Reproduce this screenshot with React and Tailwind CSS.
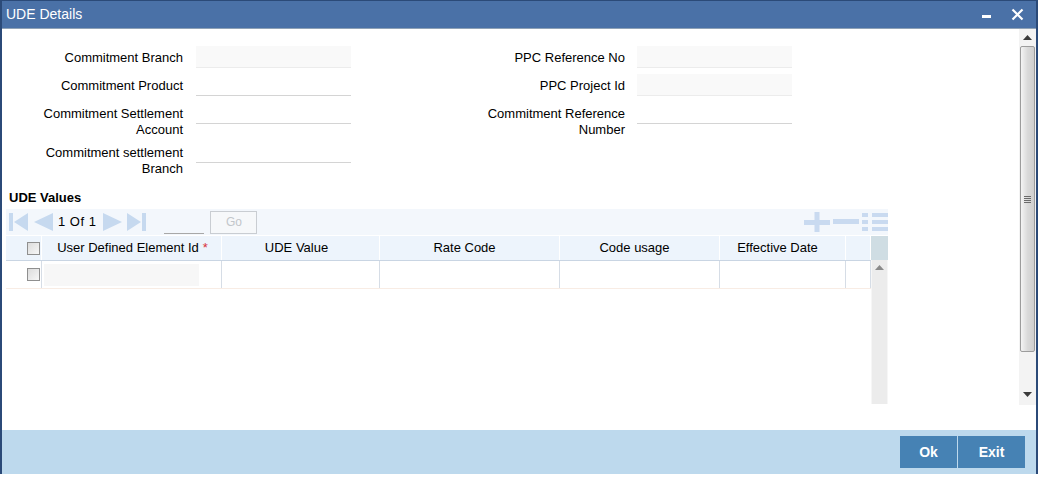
import React from "react";

const Field = ({ gray }) => (
  <div className={`h-[22px] w-[155px] border-b border-[#d4d4d4] ${gray ? "bg-[#f9f9f9] border-[#ececec]" : "bg-white"}`} />
);

const Label = ({ children, w }) => (
  <div className={`pt-[4px] text-right text-[13px] leading-[16px] text-black ${w}`}>{children}</div>
);

const Checkbox = () => (
  <span className="inline-block h-[13px] w-[13px] border border-[#8f8f8f] bg-gradient-to-br from-[#dcdcdc] to-[#f7f7f7]" />
);

const NavIcon = ({ kind }) => (
  <svg width="22" height="22" viewBox="0 0 22 22" className="shrink-0">
    {kind === "first" && (
      <>
        <rect x="1" y="2" width="4" height="18" fill="#c6d9ef" />
        <polygon points="20,2 20,20 6,11" fill="#c6d9ef" />
      </>
    )}
    {kind === "prev" && <polygon points="21,2 21,20 2,11" fill="#c6d9ef" />}
    {kind === "next" && <polygon points="1,2 1,20 20,11" fill="#c6d9ef" />}
    {kind === "last" && (
      <>
        <polygon points="1,2 1,20 15,11" fill="#c6d9ef" />
        <rect x="16" y="2" width="4" height="18" fill="#c6d9ef" />
      </>
    )}
  </svg>
);

const cols = [
  { w: "w-[180px]", t: "User Defined Element Id", req: true, p: "pl-[2px]" },
  { w: "w-[158px]", t: "UDE Value", p: "pr-[8px]" },
  { w: "w-[180px]", t: "Rate Code", p: "pr-[10px]" },
  { w: "w-[160px]", t: "Code usage", p: "pr-[10px]" },
  { w: "w-[126px]", t: "Effective Date", p: "pr-[10px]" },
  { w: "w-[25px]", t: "", p: "" },
];

export default function App() {
  return (
    <div className="h-[483px] w-[1038px] bg-white font-['Liberation_Sans',Arial,sans-serif]">
      <div className="flex h-[474px] flex-col border-x-2 border-t border-[#2b4a78]">
        {/* Title bar */}
        <div className="flex h-[28px] shrink-0 items-center justify-between border-b border-[#8ea1b6] bg-[#4a71a7] pl-[4px] pr-[12px]">
          <span className="text-[14px] text-white">UDE Details</span>
          <div className="flex items-center gap-[20px]">
            <span className="mt-[3px] block h-[3px] w-[9px] bg-white" />
            <svg width="13" height="13" viewBox="0 0 13 13">
              <path d="M1.5 1.5 L11.5 11.5 M11.5 1.5 L1.5 11.5" stroke="white" strokeWidth="2.2" />
            </svg>
          </div>
        </div>

        {/* Body */}
        <div className="flex h-[376px] shrink-0">
          <div className="flex-1">
            <div className="flex pt-[17px]">
              {/* left column */}
              <div className="flex flex-col">
                <div className="flex h-[22px] items-start gap-[13px]">
                  <Label w="w-[181px]">Commitment Branch</Label>
                  <Field gray />
                </div>
                <div className="mt-[6px] flex h-[22px] items-start gap-[13px]">
                  <Label w="w-[181px]">Commitment Product</Label>
                  <Field />
                </div>
                <div className="mt-[6px] flex items-start gap-[13px]">
                  <Label w="w-[181px]">Commitment Settlement<br />Account</Label>
                  <Field />
                </div>
                <div className="mt-[3px] flex items-start gap-[13px]">
                  <Label w="w-[181px]">Commitment settlement<br />Branch</Label>
                  <Field />
                </div>
              </div>
              {/* right column */}
              <div className="flex flex-col">
                <div className="flex h-[22px] items-start gap-[12px]">
                  <Label w="w-[274px]">PPC Reference No</Label>
                  <Field gray />
                </div>
                <div className="mt-[6px] flex h-[22px] items-start gap-[12px]">
                  <Label w="w-[274px]">PPC Project Id</Label>
                  <Field gray />
                </div>
                <div className="mt-[6px] flex items-start gap-[12px]">
                  <Label w="w-[274px]">Commitment Reference<br />Number</Label>
                  <Field />
                </div>
              </div>
            </div>

            <div className="mt-[13px] pl-[7px] text-[13px] font-bold leading-[16px] text-black">UDE Values</div>

            {/* Grid */}
            <div className="ml-[4px] mt-[3px] w-[882px]">
              <div className="flex h-[26px] items-center bg-[#f3f7fc] pl-[2px]">
                <NavIcon kind="first" />
                <span className="w-[2px]" />
                <NavIcon kind="prev" />
                <span className="ml-[4px] text-[13px] tracking-[0.5px] text-black">1&nbsp;Of&nbsp;1</span>
                <span className="ml-[6px]" />
                <NavIcon kind="next" />
                <span className="w-[2px]" />
                <NavIcon kind="last" />
                <div className="ml-[16px] mt-[22px] h-px w-[40px] bg-[#a8a8a8]" />
                <div className="ml-[6px] flex h-[23px] w-[47px] items-center justify-center border border-[#c9cdd2] bg-[#f6f8fa] text-[12px] text-[#c2c6ca]">
                  Go
                </div>
                <div className="ml-auto flex items-center gap-[3px]">
                  <svg width="26" height="20" viewBox="0 0 26 20">
                    <rect x="0" y="8" width="26" height="5" fill="#c9daf0" />
                    <rect x="10.5" y="0" width="5" height="20" fill="#c9daf0" />
                  </svg>
                  <svg width="26" height="20" viewBox="0 0 26 20">
                    <rect x="0" y="7" width="26" height="5" fill="#c9daf0" />
                  </svg>
                  <svg width="26" height="20" viewBox="0 0 26 20">
                    <rect x="0" y="1" width="6" height="4" fill="#c9daf0" />
                    <rect x="10" y="1" width="16" height="4" fill="#c9daf0" />
                    <rect x="0" y="8" width="6" height="4" fill="#c9daf0" />
                    <rect x="10" y="8" width="16" height="4" fill="#c9daf0" />
                    <rect x="0" y="15" width="6" height="4" fill="#c9daf0" />
                    <rect x="10" y="15" width="16" height="4" fill="#c9daf0" />
                  </svg>
                </div>
              </div>

              <div className="mt-px flex h-[168px]">
                <div className="w-[865px]">
                  {/* header */}
                  <div className="flex h-[25px] border-b border-[#c9d5e3] bg-[#edf4fc]">
                    <div className="flex w-[36px] items-center justify-end border-r border-white pr-[1px]">
                      <Checkbox />
                    </div>
                    {cols.map((c, i) => (
                      <div
                        key={i}
                        className={`flex items-center justify-center border-r border-white text-[13px] text-black ${c.w} ${c.p}`}
                      >
                        {c.t}
                        {c.req && <span className="ml-[4px] text-[#d9303a]">*</span>}
                      </div>
                    ))}
                  </div>
                  {/* row */}
                  <div className="flex h-[28px] border-b border-[#f8ece4]">
                    <div className="flex w-[36px] items-center justify-end border-r border-[#d6dde6] pr-[1px]">
                      <Checkbox />
                    </div>
                    <div className="flex w-[180px] items-center border-r border-[#d6dde6] pl-[2px]">
                      <div className="h-[22px] w-[155px] bg-[#f7f7f7]" />
                    </div>
                    {cols.slice(1).map((c, i) => (
                      <div key={i} className={`border-r border-[#d6dde6] ${c.w}`} />
                    ))}
                  </div>
                </div>
                <div className="flex w-[17px] flex-col">
                  <div className="h-[24px] bg-[#cfdde3]" />
                  <div className="flex flex-1 justify-center border-x border-[#f6f6f6] bg-[#ececec] pt-[5px]">
                    <svg width="9" height="5" viewBox="0 0 9 5">
                      <polygon points="0,5 9,5 4.5,0" fill="#8a8a8a" />
                    </svg>
                  </div>
                </div>
              </div>
            </div>
          </div>

          {/* page scrollbar */}
          <div className="flex w-[17px] flex-col bg-[#f3f3f3]">
            <div className="flex h-[17px] items-center justify-center">
              <svg width="9" height="5" viewBox="0 0 9 5">
                <polygon points="0,5 9,5 4.5,0" fill="#3a3a3a" />
              </svg>
            </div>
            <div className="mx-[1px] flex h-[306px] items-center justify-center rounded-[2px] border border-[#9c9c9c] bg-gradient-to-r from-[#f4f4f4] via-[#dadada] to-[#cfcfcf]">
              <div className="flex flex-col gap-[1px]">
                <span className="block h-px w-[7px] bg-[#6a6a6a]" />
                <span className="block h-px w-[7px] bg-[#6a6a6a]" />
                <span className="block h-px w-[7px] bg-[#6a6a6a]" />
                <span className="block h-px w-[7px] bg-[#6a6a6a]" />
              </div>
            </div>
            <div className="flex flex-1 items-end justify-center pb-[8px]">
              <svg width="9" height="5" viewBox="0 0 9 5">
                <polygon points="0,0 9,0 4.5,5" fill="#3a3a3a" />
              </svg>
            </div>
          </div>
        </div>

        <div className="h-[25px] shrink-0" />

        {/* Footer */}
        <div className="flex flex-1 items-start justify-end bg-[#bdd9ed] pr-[11px] pt-[6px]">
          <button className="h-[32px] w-[57px] bg-[#4682b4] text-[14px] font-bold text-white">Ok</button>
          <button className="ml-px h-[32px] w-[67px] bg-[#4682b4] text-[14px] font-bold text-white">Exit</button>
        </div>
      </div>
    </div>
  );
}
